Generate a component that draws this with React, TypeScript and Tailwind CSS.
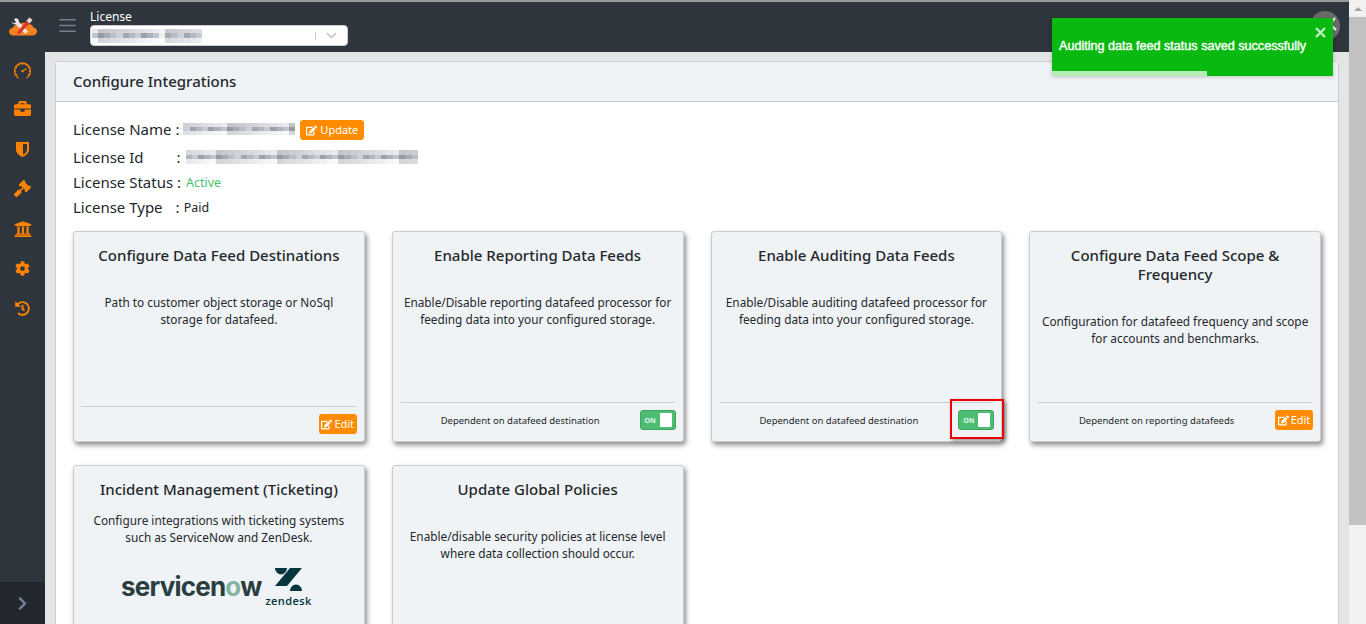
import React from 'react';
import { FaBriefcase, FaGavel, FaUniversity, FaCog, FaHistory, FaEdit, FaChevronRight } from 'react-icons/fa';
import { SlSpeedometer, SlMenu } from 'react-icons/sl';

const font = { fontFamily: '"Noto Sans", sans-serif' };

const Mosaic: React.FC<{ width: number; height: number; seed: number; cell?: number; gaps?: number[] }> = ({ width, height, seed, cell = 6, gaps = [] }) => {
  const count = Math.floor(width / cell);
  const cells = Array.from({ length: count }, (_, i) => ((i * 7 + seed) * 13) % 10);
  return (
    <span className="inline-flex align-middle" style={{ width, height }}>
      {cells.map((v, i) => (
        <span key={i} className="flex flex-col flex-1">
          <span className="flex-1" style={{ background: gaps.includes(i) ? '#f2f3f4' : `rgb(${195 + v * 4},${197 + v * 4},${201 + v * 4})` }} />
          <span className="flex-1" style={{ background: gaps.includes(i) ? '#eceeef' : `rgb(${150 + ((v * 3) % 10) * 6},${154 + ((v * 3) % 10) * 6},${162 + ((v * 3) % 10) * 6})` }} />
          <span className="flex-1" style={{ background: gaps.includes(i) ? '#ffffff' : `rgb(${212 + v * 4},${213 + v * 4},${216 + v * 4})` }} />
        </span>
      ))}
    </span>
  );
};

const AppLogo = () => (
  <svg width="28" height="20" viewBox="0 0 28 20">
    <path d="M5 18.500C1.500 18.500 0 16.500 0 14.500s1.600-3.600 4-3.800C5 7.500 8 6.500 10.500 7.500c2-2.400 6.500-2.400 8.500 0 2.500-.8 5 .6 5.400 3 2.200.3 3.600 2 3.600 4 0 2.200-1.800 4-4.600 4z" fill="#f58220" />
    <path d="M5 2.500l2-1.500 2.500 1.500.5 2.500 9 9.500-2.500 2.500-9.500-9.500L4 7 2.500 4.500l2.500 2 2-1.500z" fill="#e8e8e8" />
    <path d="M20.500 0.500l3 2.500-12 13-2 1.500-1.500-1.500 1.500-2.500z" fill="#d9362b" />
    <path d="M20.500 0.500l3 2.500-3 3.500-3-3z" fill="#d8d8d8" />
  </svg>
);

const ShieldIcon = () => (
  <svg width="13" height="15" viewBox="0 0 13 15">
    <path d="M0 0h13v7.500c0 3.500-3.200 6-6.500 7.500C3.200 13.500 0 11 0 7.500z" fill="#ff8300" />
    <path d="M7 2h4v5.500c0 2.200-1.800 4-4 5.200z" fill="#2f353d" />
  </svg>
);

const sideIcons = [
  <SlSpeedometer size={17} className="stroke-[#ff8300] stroke-[20]" />,
  <FaBriefcase size={17} className="-mt-[3px]" />,
  <ShieldIcon />,
  <FaGavel size={17} className="-mt-[2px]" />,
  <FaUniversity size={18} />,
  <FaCog size={15} />,
  <FaHistory size={15} />,
];

const Sidebar = () => (
  <aside className="w-[45px] shrink-0 bg-[#2f353d] flex flex-col">
    <div className="flex-1 flex flex-col items-center pt-[9px] gap-[20.6px] text-[#ff8300]">
      {sideIcons.map((icon, i) => (
        <div key={i} className="h-[19px] flex items-center justify-center">
          {icon}
        </div>
      ))}
    </div>
    <div className="h-[42px] bg-[#23282e] flex items-center justify-center text-[#73818f]">
      <FaChevronRight size={15} />
    </div>
  </aside>
);

const EditBtn = () => (
  <button className="h-[20px] w-[38px] rounded-[3px] bg-[#ff8c00] text-white text-[11px] flex items-center justify-center gap-[2px]">
    <FaEdit size={11} />
    Edit
  </button>
);

const Toggle = () => (
  <div className="w-[36px] h-[20px] rounded-[3px] bg-[#4dbd74] border border-[#3aa662] flex items-center justify-between pl-[4px] pr-[3px]">
    <span className="text-[7px] font-bold text-[#e4f5ea] leading-none">ON</span>
    <span className="w-[12px] h-[14px] bg-white rounded-[1px]" />
  </div>
);

const Footer: React.FC<{ text: string; children: React.ReactNode }> = ({ text, children }) => (
  <div className="mt-auto mx-[8px] border-t border-[#c8ced3] h-[39px] flex items-center justify-between">
    <span className="flex-1 text-center text-[9.5px] text-[#23282c] pb-[2px]">{text}</span>
    <div className="pb-[4px] -mr-[1px]">{children}</div>
  </div>
);

const Card: React.FC<{ title: string; desc: string; descClass?: string; children?: React.ReactNode }> = ({ title, desc, descClass = 'mt-[29px]', children }) => (
  <div className="h-[211px] bg-[#f0f3f5] border border-[#c8ced3] rounded-[3px] shadow-[2px_3px_5px_rgba(0,0,0,0.45)] flex flex-col">
    <h3 className="mt-[14px] px-[10px] text-center text-[15px] leading-[19px] font-medium text-[#23282c]">{title}</h3>
    <p className={`${descClass} px-[10px] text-center text-[11.8px] leading-[17px] text-[#23282c]`}>{desc}</p>
    {children}
  </div>
);

const Logos = () => (
  <div className="mt-[22px] flex items-start justify-center pr-[5px]">
    <span className="mt-[6px] text-[26px] leading-[26px] font-bold text-[#293e40] tracking-[-0.8px]" style={{ fontFamily: 'Inter, sans-serif' }}>
      servicen<span className="text-[#81b5a1]">o</span>w
    </span>
    <div className="ml-[4px] flex flex-col items-center">
      <svg width="29" height="24" viewBox="0 0 29 24" fill="#03363d">
        <path d="M1 0h12c0 3.500-3 6.500-6 6.500S1 3.500 1 0z" />
        <path d="M16 0h12L13 18H1z" />
        <path d="M16 23c0-3.600 3-6.500 6-6.500s6 2.900 6 6.500z" />
      </svg>
      <span className="mt-[4px] text-[11px] leading-[10px] font-semibold tracking-[0.4px] text-[#03363d]" style={{ fontFamily: '"Open Sans", sans-serif' }}>zendesk</span>
    </div>
  </div>
);

const Row: React.FC<{ label: string; children: React.ReactNode; className?: string }> = ({ label, children, className }) => (
  <div className={`flex items-center ${className ?? ''}`}>
    <span className="text-[15px] text-[#23282c] whitespace-pre">{label}</span>
    {children}
  </div>
);

export default function App() {
  return (
    <div className="h-screen w-full overflow-hidden flex bg-white" style={font}>
      <div className="flex-1 min-w-0 flex flex-col">
        <div className="h-[2px] bg-[#9a9a9a] shrink-0" />
        <header className="relative h-[50px] shrink-0 bg-[#2f353d] flex items-center">
          <div className="w-[45px] flex justify-center mb-[1px] pl-[1px]">
            <AppLogo />
          </div>
          <div className="ml-[14px] text-[#73818f] mb-[4px]">
            <SlMenu size={17} />
          </div>
          <div className="ml-[14px] mt-[1px]">
            <div className="text-[12px] leading-[16px] text-white">License</div>
            <div className="w-[258px] h-[21px] bg-white rounded-[4px] border border-[#c8ced3] flex items-center pl-[1px] pr-[10px]">
              <Mosaic width={110} height={14} seed={3} gaps={[11]} />
              <span className="ml-auto h-[8px] w-px bg-[#c8c8c8]" />
              <svg className="ml-[10px]" width="11" height="7" viewBox="0 0 11 7" fill="none" stroke="#c4c4c4" strokeWidth="1.6"><path d="M1 1l4.500 4.500L10 1" /></svg>
            </div>
          </div>
          <div className="absolute right-[9px] top-[9px] w-[30px] h-[30px] rounded-full bg-[#6b6b6b] flex items-center justify-center">
            <svg width="28" height="20" viewBox="0 0 28 20" fill="none" stroke="#f2f2f2" strokeWidth="2"><path d="M24 2l-5 6M19 8l6 6" /></svg>
          </div>
        </header>
        <div className="flex-1 min-h-0 flex">
          <Sidebar />
          <main className="flex-1 min-w-0 bg-[#e4e5e6] pl-[10px] pr-[10px] pt-[9px]">
            <section className="bg-white border border-[#c8ced3] rounded-t-[3px] h-[700px]">
              <div className="h-[40px] bg-[#f0f3f5] border-b border-[#c8ced3] flex items-center px-[17px]">
                <h2 className="text-[15px] font-medium text-[#23282c]">Configure Integrations</h2>
              </div>
              <div className="pl-[17px] pr-[17px]">
                <Row label="License Name : " className="h-[20px] mt-[17px]">
                  <Mosaic width={112} height={13} seed={1} />
                  <button className="ml-[5px] mt-[2px] h-[20px] w-[64px] rounded-[3px] bg-[#ff8c00] text-white text-[11px] flex items-center justify-center gap-[3px]">
                    <FaEdit size={11} />
                    Update
                  </button>
                </Row>
                <Row label="License Id" className="h-[20px] mt-[8px]">
                  <span className="ml-[33px] mr-[5px] text-[15px] text-[#23282c]">:</span>
                  <Mosaic width={232} height={14} seed={5} />
                </Row>
                <Row label="License Status : " className="h-[20px] mt-[5px]">
                  <span className="ml-[1px] pt-[2px] text-[12.5px] text-[#4dbd74]">Active</span>
                </Row>
                <Row label="License Type" className="h-[20px] mt-[5px]">
                  <span className="ml-[13px] text-[15px] text-[#23282c]">:</span>
                  <span className="ml-[4px] pt-[2px] text-[12.5px] text-[#23282c]">Paid</span>
                </Row>
                <div className="mt-[14px] grid grid-cols-4 gap-x-[27px] gap-y-[23px]">
                  <Card title="Configure Data Feed Destinations" desc="Path to customer object storage or NoSql storage for datafeed.">
                    <div className="mt-auto mx-[7px] border-t border-[#c8ced3] h-[35px] flex items-center justify-end">
                      <EditBtn />
                    </div>
                  </Card>
                  <Card title="Enable Reporting Data Feeds" desc="Enable/Disable reporting datafeed processor for feeding data into your configured storage.">
                    <Footer text="Dependent on datafeed destination"><Toggle /></Footer>
                  </Card>
                  <Card title="Enable Auditing Data Feeds" desc="Enable/Disable auditing datafeed processor for feeding data into your configured storage.">
                    <Footer text="Dependent on datafeed destination">
                      <div className="relative">
                        <Toggle />
                        <div className="absolute -left-[8px] -top-[11px] w-[54px] h-[40px] border-[2px] border-[#f00000] shadow-[2px_2px_4px_rgba(0,0,0,0.4)]" />
                      </div>
                    </Footer>
                  </Card>
                  <Card title="Configure Data Feed Scope & Frequency" desc="Configuration for datafeed frequency and scope for accounts and benchmarks.">
                    <Footer text="Dependent on reporting datafeeds"><EditBtn /></Footer>
                  </Card>
                  <Card title="Incident Management (Ticketing)" descClass="mt-[13px]" desc="Configure integrations with ticketing systems such as ServiceNow and ZenDesk.">
                    <Logos />
                  </Card>
                  <Card title="Update Global Policies" desc="Enable/disable security policies at license level where data collection should occur." />
                </div>
              </div>
            </section>
          </main>
        </div>
      </div>
      <div className="w-[17px] shrink-0 bg-[#f1f1f1] flex flex-col">
        <div className="h-[17px] flex items-center justify-center">
          <span className="w-0 h-0 border-x-[4px] border-x-transparent border-b-[4px] border-b-[#a3a3a3]" />
        </div>
        <div className="h-[508px] bg-[#c1c1c1]" />
      </div>
      <div className="absolute left-[1052px] top-[18px] w-[281px] h-[58px] bg-[#08b90f] text-white shadow-[0_1px_4px_rgba(0,0,0,0.2)]">
        <span className="absolute right-[7px] top-[9px] text-[#bff0c1]">
          <svg width="11" height="11" viewBox="0 0 11 11" stroke="currentColor" strokeWidth="2.4"><path d="M1 1l9 9M10 1l-9 9" /></svg>
        </span>
        <p className="absolute left-[7px] top-[20px] text-[12.6px] leading-[17px] [-webkit-text-stroke:0.4px_white] whitespace-nowrap" style={{ fontFamily: '"Liberation Sans", sans-serif' }}>
          Auditing data feed status saved successfully
        </p>
        <div className="absolute left-0 bottom-0 h-[5px] w-[155px] bg-[#b5ecb7]" />
      </div>
    </div>
  );
}
